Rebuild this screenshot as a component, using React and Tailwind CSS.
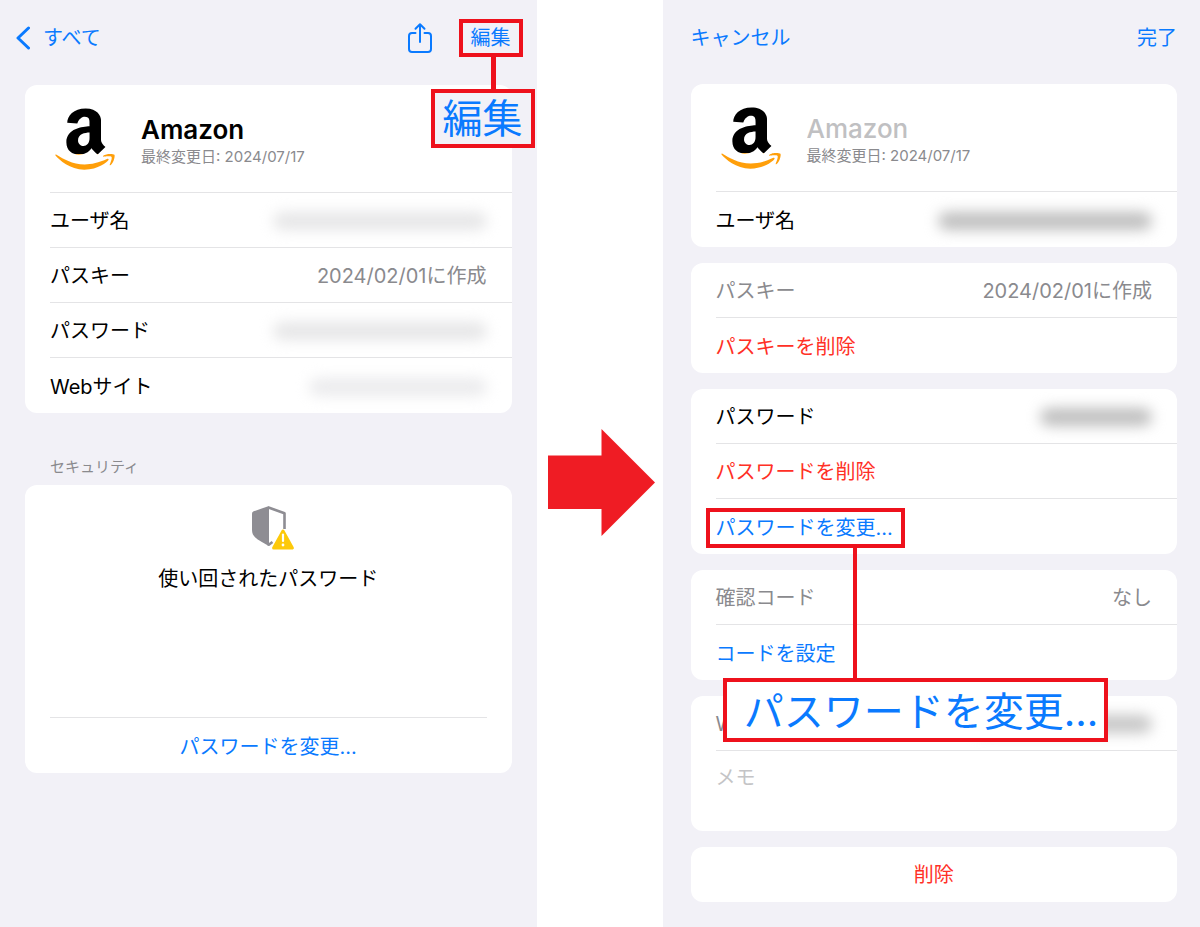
import { FaAmazon } from "react-icons/fa";

function AmazonLogo({ id }) {
  return (
    <span className="flex w-[60px] shrink-0 justify-center">
      <svg width="0" height="0" className="absolute" aria-hidden="true">
        <defs>
          <linearGradient id={id} gradientUnits="userSpaceOnUse" x1="0" y1="0" x2="0" y2="512">
            <stop offset="0.719" stopColor="#000000" />
            <stop offset="0.719" stopColor="#ff9f0a" />
          </linearGradient>
        </defs>
      </svg>
      <FaAmazon size={70} fill={`url(#${id})`} className="shrink-0" aria-label="Amazon" />
    </span>
  );
}

function Card({ children, className = "" }) {
  return <section className={`rounded-xl bg-white ${className}`}>{children}</section>;
}

function Row({ children, last = false }) {
  return (
    <div
      className={`ml-[25px] flex h-[55px] items-center justify-between pt-0.5 pr-[25px] ${
        last ? "" : "border-b border-[#e4e4e6]"
      }`}
    >
      {children}
    </div>
  );
}

function Redacted({ className }) {
  return <span aria-label="非表示" role="img" className={`h-[18px] rounded-full blur-[7px] ${className}`} />;
}

function AccountHeader({ id, children }) {
  return (
    <div className="ml-[25px] flex h-[108px] items-center gap-[26px] border-b border-[#e4e4e6] pl-[5px]">
      <AmazonLogo id={id} />
      <div className="flex min-w-0 flex-col pt-1">
        {children}
        <span className="text-[15px] leading-[22px] whitespace-nowrap text-[#8a8a8e]">最終変更日: 2024/07/17</span>
      </div>
    </div>
  );
}

function ShieldWarning() {
  return (
    <svg width="44" height="46" viewBox="0 0 44 46" aria-hidden="true">
      <path
        d="M17.5 2.5 L33.5 8.2 V24"
        fill="none"
        stroke="#8e8d93"
        strokeWidth="2.6"
        strokeLinejoin="round"
      />
      <path
        d="M18 1 L2.6 6.3 Q1 6.9 1 8.6 V25 C1 31.5 5.5 34.5 18 41 Z"
        fill="#8e8d93"
      />
      <path d="M16.5 39 L18 39.5 L21.5 37" fill="none" stroke="#8e8d93" strokeWidth="2.6" />
      <path
        d="M32 26 L41.4 43 H22.6 Z"
        fill="#fdc90a"
        stroke="#fdc90a"
        strokeWidth="3"
        strokeLinejoin="round"
      />
      <path d="M32 29.5 V36" stroke="#ffffff" strokeWidth="2.2" strokeLinecap="round" />
      <circle cx="32" cy="40" r="1.4" fill="#ffffff" />
    </svg>
  );
}

function DetailScreen() {
  return (
    <main className="flex-1 bg-[#f2f1f7] px-[25px] pb-6">
      <nav className="flex h-[85px] items-start justify-between pt-[19px]">
        <button className="-ml-[9px] flex h-[38px] items-center gap-[13px] text-[#0a7aff]">
          <svg width="14" height="24" viewBox="0 0 14 24" fill="none" aria-hidden="true">
            <path
              d="M12.5 2 L2 12 L12.5 22"
              stroke="currentColor"
              strokeWidth="3"
              strokeLinecap="round"
              strokeLinejoin="round"
            />
          </svg>
          すべて
        </button>
        <div className="flex items-center gap-[38px] pr-px text-[#0a7aff]">
          <button aria-label="共有">
            <svg width="26" height="32" viewBox="0 0 26 32" fill="none" stroke="currentColor" strokeWidth="2" strokeLinecap="round" strokeLinejoin="round" aria-hidden="true">
              <path d="M8.5 11 H5 Q2 11 2 14 V27 Q2 30 5 30 H21 Q24 30 24 27 V14 Q24 11 21 11 H17.5" />
              <path d="M13 20 V2.5 M8.5 6.8 L13 2.2 L17.5 6.8" />
            </svg>
          </button>
          <button className="relative h-[38px]">
            編集
            <span className="absolute -inset-x-3 inset-y-0 border-4 border-[#ee111c]" />
            <span aria-hidden="true" className="absolute top-9 left-5 h-9 w-[5px] bg-[#ee111c]" />
            <span
              aria-hidden="true"
              className="absolute top-[70px] -right-6 flex h-[59px] w-[104px] items-center justify-center border-4 border-[#ee111c] bg-[#f2f1f7] text-[40px] leading-none whitespace-nowrap"
            >
              編集
            </span>
          </button>
        </div>
      </nav>

      <Card>
        <AccountHeader id="logo-detail">
          <h1 className="text-[26px] leading-8 font-semibold">Amazon</h1>
        </AccountHeader>
        <Row>
          <span>ユーザ名</span>
          <Redacted className="w-[214px] bg-[#e6e6e7]" />
        </Row>
        <Row>
          <span>パスキー</span>
          <span className="text-[#8a8a8e]">2024/02/01に作成</span>
        </Row>
        <Row>
          <span>パスワード</span>
          <Redacted className="w-[214px] bg-[#e6e6e7]" />
        </Row>
        <Row last>
          <span>Webサイト</span>
          <Redacted className="w-[178px] bg-[#ebebed]" />
        </Row>
      </Card>

      <h2 className="mt-[43px] mb-[7px] ml-[25px] text-[15px] leading-[22px] text-[#8a8a8e]">セキュリティ</h2>

      <Card className="flex h-[288px] flex-col items-center px-[25px] pt-5">
        <span className="ml-2.5">
          <ShieldWarning />
        </span>
        <p className="mt-3 leading-8">使い回されたパスワード</p>
        <button className="mt-auto flex h-14 w-full items-center justify-center border-t border-[#e4e4e6] pt-0.5 text-[#0a7aff]">
          パスワードを変更...
        </button>
      </Card>
    </main>
  );
}

function EditScreen() {
  return (
    <main className="flex-1 bg-[#f2f1f7] pr-[23px] pb-6 pl-7">
      <nav className="flex h-[84px] items-start justify-between pt-[19px] text-[#0a7aff]">
        <button className="h-[38px]">キャンセル</button>
        <button className="h-[38px]">完了</button>
      </nav>

      <div className="flex flex-col gap-4">
        <Card>
          <AccountHeader id="logo-edit">
            <input
              aria-label="タイトル"
              placeholder="Amazon"
              className="h-8 w-full text-[26px] leading-8 font-medium outline-none placeholder:text-[#c0c0c2]"
            />
          </AccountHeader>
          <Row last>
            <span>ユーザ名</span>
            <Redacted className="w-[214px] bg-[#bebebe]" />
          </Row>
        </Card>

        <Card>
          <Row>
            <span className="text-[#8a8a8e]">パスキー</span>
            <span className="text-[#8a8a8e]">2024/02/01に作成</span>
          </Row>
          <Row last>
            <button className="text-[#ff3026]">パスキーを削除</button>
          </Row>
        </Card>

        <Card>
          <Row>
            <span>パスワード</span>
            <Redacted className="w-[112px] bg-[#bebebe]" />
          </Row>
          <Row>
            <button className="text-[#ff3026]">パスワードを削除</button>
          </Row>
          <Row last>
            <button className="relative z-10 h-10 whitespace-nowrap text-[#0a7aff]">
              パスワードを変更...
              <span className="absolute inset-y-0 -right-3 -left-[10px] border-4 border-[#ee111c]" />
              <span aria-hidden="true" className="absolute top-10 left-[137px] h-[132px] w-1 bg-[#ee111c]" />
              <span
                aria-hidden="true"
                className="absolute top-[170px] left-[7px] flex h-16 w-[385px] items-center justify-center border-4 border-[#ee111c] bg-white pt-1 pl-3 text-[40px] leading-none"
              >
                パスワードを変更...
              </span>
            </button>
          </Row>
        </Card>

        <Card>
          <Row>
            <span className="text-[#8a8a8e]">確認コード</span>
            <span className="text-[#8a8a8e]">なし</span>
          </Row>
          <Row last>
            <button className="text-[#0a7aff]">コードを設定</button>
          </Row>
        </Card>

        <Card>
          <Row>
            <span className="text-[#8a8a8e]">Webサイト</span>
            <Redacted className="w-[178px] bg-[#c6c6c6]" />
          </Row>
          <textarea
            aria-label="メモ"
            placeholder="メモ"
            className="block h-20 w-full resize-none px-[25px] py-3 leading-[30px] outline-none placeholder:text-[#c4c4c6]"
          />
        </Card>

        <Card>
          <button className="h-[55px] w-full text-[#ff3026]">削除</button>
        </Card>
      </div>
    </main>
  );
}

export default function App() {
  return (
    <div
      lang="ja"
      className="flex min-h-screen bg-white font-['Inter','Noto_Sans_CJK_JP',sans-serif] text-[20px] leading-[30px] text-black"
    >
      <DetailScreen />
      <div className="flex w-[126px] shrink-0 items-center justify-center pt-[38px] pl-[3px]">
        <svg width="107" height="107" viewBox="0 0 107 107" aria-hidden="true">
          <path d="M0 26.5 H53.5 V0 L107 53.5 L53.5 107 V80 H0 Z" fill="#ef1c24" />
        </svg>
      </div>
      <EditScreen />
    </div>
  );
}
